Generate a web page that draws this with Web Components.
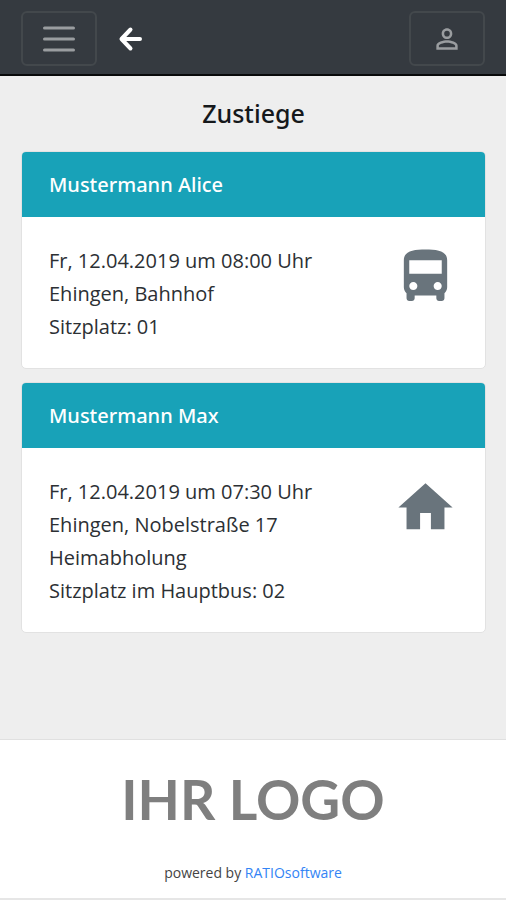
<!DOCTYPE html>
<html lang="de">
<head>
<meta charset="utf-8">
<meta name="viewport" content="width=device-width, initial-scale=1">
<title>Zustiege</title>
<style>
  body { margin: 0; background: #eee; color: #2c3034; font-family: "Open Sans", "Noto Sans", sans-serif; font-size: 20px; }
</style>
</head>
<body>
<app-shell>
  <nav-bar slot="top"></nav-bar>
  <h1 slot="title">Zustiege</h1>
  <boarding-card icon="bus">
    <span slot="name">Mustermann Alice</span>
    <div>Fr, 12.04.2019 um 08:00 Uhr</div>
    <div>Ehingen, Bahnhof</div>
    <div>Sitzplatz: 01</div>
  </boarding-card>
  <boarding-card icon="home">
    <span slot="name">Mustermann Max</span>
    <div>Fr, 12.04.2019 um 07:30 Uhr</div>
    <div>Ehingen, Nobelstraße 17</div>
    <div>Heimabholung</div>
    <div>Sitzplatz im Hauptbus: 02</div>
  </boarding-card>
  <brand-footer slot="bottom">
    <span slot="logo">IHR LOGO</span>
  </brand-footer>
</app-shell>
<script>
class Base extends HTMLElement {
  connectedCallback() {
    if (this.shadowRoot) return;
    this.attachShadow({ mode: 'open' }).innerHTML = this.view();
  }
}

customElements.define('app-shell', class extends Base {
  view() {
    return `<style>
      :host { display: flex; flex-direction: column; min-height: 100vh; }
      main { flex: 1; display: flex; flex-direction: column; gap: 13px; padding: 20px 20px 20px 21px; }
      ::slotted(h1) { margin: 0 0 8px; color: #15181b; font-family: "Noto Sans", sans-serif; font-size: 25px; line-height: 34px; font-weight: 500; text-align: center; }
    </style>
    <slot name="top"></slot>
    <main><slot name="title"></slot><slot></slot></main>
    <slot name="bottom"></slot>`;
  }
});

customElements.define('nav-bar', class extends Base {
  view() {
    return `<style>
      :host { display: block; background: #353a40; border-bottom: 2px solid #08090a; }
      nav { display: flex; align-items: center; padding: 11px 21px 8px; }
      button { box-sizing: border-box; width: 76px; height: 55px; padding: 0; display: flex; align-items: center; justify-content: center;
        background: none; border: 2px solid #43484c; border-radius: 6px; color: #9a9da0; }
      a { display: flex; margin-left: 20px; color: #fff; }
      .account { margin-left: auto; }
      svg { display: block; }
    </style>
    <nav>
      <button type="button" aria-label="Menü"><svg width="36" height="36" viewBox="0 0 36 36" fill="none" stroke="currentColor" stroke-width="3" stroke-linecap="round"><path d="M3.500 7h29M3.500 18h29M3.500 29h29"/></svg></button>
      <a href="#" aria-label="Zurück"><svg width="28" height="28" viewBox="0 0 28 28" fill="none" stroke="currentColor" stroke-width="4" stroke-linecap="round" stroke-linejoin="round"><path d="M13.500 4.500L4.500 14l9 9.500M5.500 14H23"/></svg></a>
      <button class="account" type="button" aria-label="Konto"><svg width="32" height="32" viewBox="0 0 24 24" fill="currentColor"><path d="M12 5.900a2.100 2.100 0 1 1 0 4.200 2.100 2.100 0 0 1 0-4.200m0 9c2.970 0 6.100 1.460 6.100 2.100v1.100H5.900V17c0-.64 3.130-2.100 6.100-2.100M12 4C9.790 4 8 5.790 8 8s1.790 4 4 4 4-1.790 4-4-1.790-4-4-4zm0 9c-2.670 0-8 1.340-8 4v3h16v-3c0-2.660-5.330-4-8-4z"/></svg></button>
    </nav>`;
  }
});

const ICONS = {
  bus: 'M4 16c0 .88.39 1.670 1 2.220V20c0 .55.45 1 1 1h1c.55 0 1-.45 1-1v-1h8v1c0 .55.45 1 1 1h1c.55 0 1-.45 1-1v-1.780c.61-.55 1-1.340 1-2.220V6c0-3.500-3.580-4-8-4s-8 .5-8 4v10zm3.500 1c-.83 0-1.500-.67-1.500-1.500S6.670 14 7.500 14s1.500.67 1.500 1.500S8.330 17 7.500 17zm9 0c-.83 0-1.500-.67-1.500-1.500s.67-1.500 1.500-1.500 1.500.67 1.500 1.500-.67 1.500-1.500 1.500zm1.500-6H6V6h12v5z',
  home: 'M10 20v-6h4v6h5v-8h3L12 3 2 12h3v8z'
};

customElements.define('boarding-card', class extends Base {
  view() {
    return `<style>
      :host { display: block; background: #fff; border: 1px solid #e2e2e2; border-radius: 5px; overflow: hidden; }
      header { padding: 16px 27px; background: #18a2b8; color: #fff; font-family: "Noto Sans", sans-serif; line-height: 33px; font-weight: 500; }
      .body { display: flex; align-items: flex-start; justify-content: space-between; gap: 16px; padding: 27px 27px 25px; line-height: 33px; }
      svg { flex: none; fill: #69747c; }
    </style>
    <header><slot name="name"></slot></header>
    <div class="body">
      <div><slot></slot></div>
      <svg width="65" height="65" viewBox="0 0 24 24" aria-hidden="true"><path d="${ICONS[this.getAttribute('icon')]}"/></svg>
    </div>`;
  }
});

customElements.define('brand-footer', class extends Base {
  view() {
    return `<style>
      :host { display: block; background: #fff; border-top: 1px solid #e0e0e0; border-bottom: 2px solid #e6e6e6; text-align: center; }
      .logo { padding-top: 23px; font-family: Lato, sans-serif; font-size: 55px; line-height: 72px; font-weight: 700; color: #7f7f7f; }
      p { margin: 0; padding: 28px 0 15px; font-size: 14px; line-height: 20px; color: #444; }
      a { color: #3384f5; text-decoration: none; }
    </style>
    <div class="logo"><slot name="logo"></slot></div>
    <p>powered by <a href="#">RATIOsoftware</a></p>`;
  }
});
</script>
</body>
</html>
